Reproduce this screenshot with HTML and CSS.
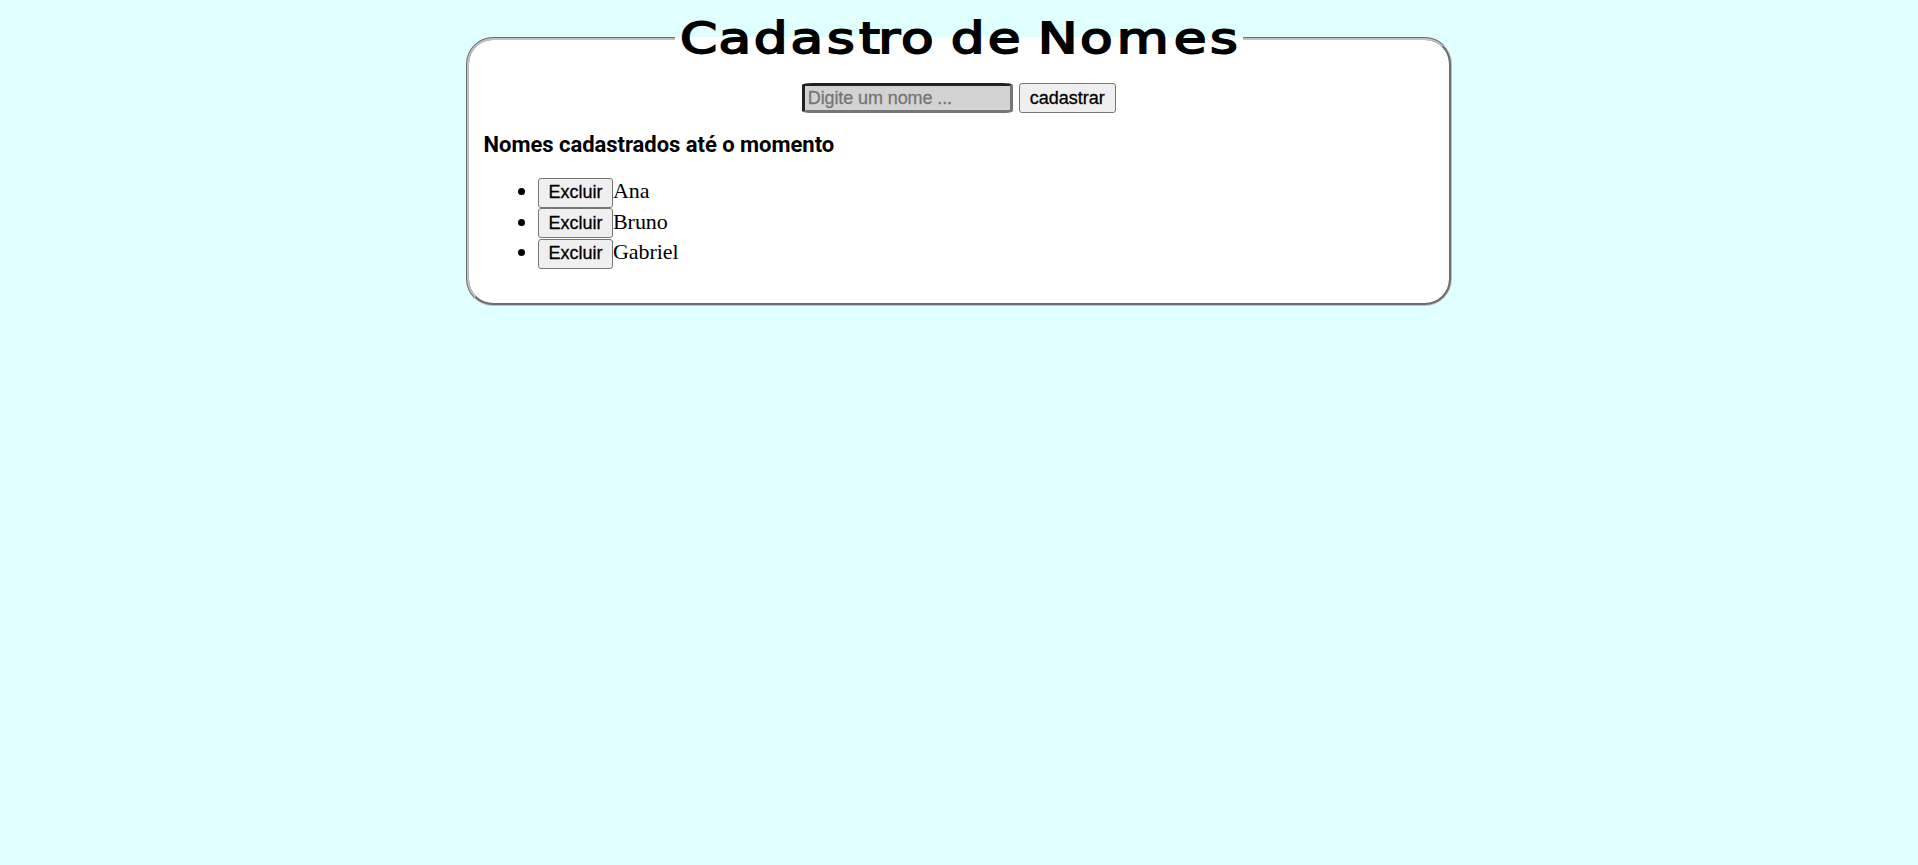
FILE: index.html
```html
<!DOCTYPE html>
<html lang="pt-BR">
<head>
<meta charset="utf-8">
<title>Cadastro de Nomes</title>
<link rel="stylesheet" href="styles.css">
</head>
<body>
<fieldset class="card">
  <legend class="title">
    <svg class="title-art" width="562" height="55" viewBox="0 0 562 55">
      <text transform="scale(1.24 1)" y="42" x="1.6 32.7 61.2 90.7 120.2 146 161.5 179.8 206 220 249.9 277 290.2 324.1 353.8 399.9 429.1">Cadastro de Nomes</text>
    </svg>
  </legend>
  <form class="form">
    <input class="field" type="text" placeholder="Digite um nome ...">
    <button class="btn submit" type="button">cadastrar</button>
  </form>
  <h2 class="subtitle">Nomes cadastrados até o momento</h2>
  <ul class="names">
    <li><button class="btn remove" type="button">Excluir</button><span>Ana</span></li>
    <li><button class="btn remove" type="button">Excluir</button><span>Bruno</span></li>
    <li><button class="btn remove" type="button">Excluir</button><span>Gabriel</span></li>
  </ul>
</fieldset>
</body>
</html>
```
FILE: styles.css
```css
body {
  margin: 0;
  padding-top: 11px;
  background: #e0ffff;
  font: 22px "Liberation Serif", serif;
  color: #000;
}
.card {
  box-sizing: border-box;
  width: 986px;
  height: 295px;
  margin: 0 auto;
  padding: 17px 15px 0 14.5px;
  border: 3px groove #c0c0c0;
  border-radius: 27px;
  background: #fff;
}
.title {
  height: 55px;
  margin: 0 auto;
  padding: 0 3px;
}
.title-art {
  display: block;
  font: 43px "DejaVu Sans", sans-serif;
  stroke: #000;
  stroke-width: 1.8px;
}
.form {
  display: flex;
  justify-content: center;
  gap: 6px;
  height: 30px;
}
.field {
  box-sizing: border-box;
  width: 211px;
  height: 30px;
  padding: 1px 3px;
  border: 3px inset #767676;
  border-radius: 11px / 2px;
  background: #d3d3d3;
  font: 18px "Liberation Sans", Arial, sans-serif;
  letter-spacing: -0.1px;
}
.field::placeholder {
  color: #757575;
  -webkit-text-stroke: 0.3px #757575;
}
.btn {
  box-sizing: border-box;
  height: 30px;
  padding: 0;
  border: 1px solid #767676;
  border-radius: 3px;
  background: #efefef;
  color: #000;
  font: 18px "Liberation Sans", Arial, sans-serif;
  -webkit-text-stroke: 0.3px #000;
}
.submit {
  width: 97px;
}
.remove {
  width: 75px;
  vertical-align: baseline;
}
.subtitle {
  margin: 18px 0 0;
  font: bold 22px/28px Roboto, sans-serif;
  letter-spacing: -0.03px;
}
.names {
  margin: 17px 0 0;
  padding-left: 54.5px;
}
.names li {
  height: 30.5px;
  line-height: 30px;
}
.names span {
  letter-spacing: -0.05px;
}
```
